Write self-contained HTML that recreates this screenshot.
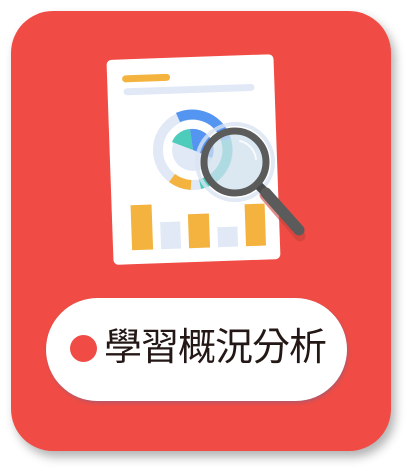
<!DOCTYPE html>
<html><head><meta charset="utf-8"><style>
html,body{margin:0;padding:0;background:#fff;width:411px;height:471px;overflow:hidden}
.card{position:absolute;left:11px;top:11px;width:380px;height:440px;border-radius:42px;background:#f04c45;box-shadow:4px 6px 10px rgba(0,0,0,.3)}
.pill{position:absolute;left:46px;top:298px;width:301px;height:103px;border-radius:52px;background:#fff;box-shadow:1px 2px 3px rgba(120,100,140,.5)}
.dot{position:absolute;left:70px;top:335px;width:27px;height:27px;border-radius:50%;background:#f04c45}
.txt{position:absolute;left:104px;top:322px;font:38px "Liberation Sans","Noto Sans CJK TC",sans-serif;color:#231815;letter-spacing:-1px;line-height:52px}
svg{position:absolute;left:0;top:0}
</style></head><body>
<div class="card"></div>
<svg width="411" height="471" viewBox="0 0 411 471">
<g transform="rotate(-2 194 160)">
<rect x="110" y="57" width="167" height="205" rx="5" fill="#fff"/>
<rect x="125" y="73" width="48" height="7" rx="3.5" fill="#f4b33f"/>
<rect x="126" y="86" width="131" height="7" rx="3.5" fill="#e1e9f6"/>
<rect x="129" y="203" width="21" height="45" fill="#f4b33f"/>
<rect x="158" y="221" width="20" height="27" fill="#e1e9f6"/>
<rect x="186" y="214" width="21" height="34" fill="#f4b33f"/>
<rect x="215" y="228" width="20" height="20" fill="#e1e9f6"/>
<rect x="243" y="206" width="20" height="42" fill="#f4b33f"/>
</g>
<circle cx="193" cy="150" r="35" fill="none" stroke="#e1e9f6" stroke-width="10"/>
<path d="M178 117.5 A35 35 0 0 1 226 140" fill="none" stroke="#5495f2" stroke-width="10"/>
<path d="M226 140 A35 35 0 0 1 200 184" fill="none" stroke="#4dccbb" stroke-width="10"/>
<path d="M191 185 A35 35 0 0 1 172 178" fill="none" stroke="#f4b33f" stroke-width="10"/>
<circle cx="193" cy="150" r="21" fill="#e1e9f6"/>
<path d="M193 150 L172 142 A21 21 0 0 1 190 129 Z" fill="#4dccbb"/>
<path d="M193 150 L190 129 A21 21 0 0 1 212 158 Z" fill="#5495f2"/>
<line x1="265" y1="195" x2="300" y2="236" stroke="#c8413b" stroke-width="11" stroke-linecap="round" opacity=".6"/>
<circle cx="235" cy="162" r="38" fill="none" stroke="#d9e4f2" stroke-width="4" opacity=".8"/>
<circle cx="235" cy="162" r="31" fill="#cfe0ee" opacity=".75"/>
<circle cx="235" cy="162" r="31" fill="none" stroke="#5b5b5b" stroke-width="7"/>
<path d="M240 141 A21 21 0 0 1 256 159" fill="none" stroke="#fff" stroke-width="2" stroke-linecap="round" opacity=".8"/>
<line x1="259" y1="186" x2="266" y2="193" stroke="#4a4a4a" stroke-width="9"/>
<line x1="266" y1="193" x2="299" y2="230" stroke="#5b5b5b" stroke-width="11" stroke-linecap="round"/>
</svg>
<div class="pill"></div>
<div class="dot"></div>
<div class="txt">學習概況分析</div>
</body></html>
